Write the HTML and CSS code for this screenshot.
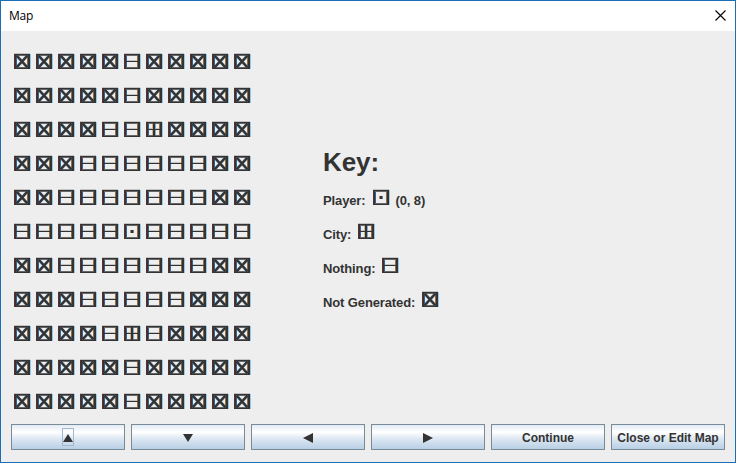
FILE: index.html
```
<!DOCTYPE html>
<html lang="en">
<head>
<meta charset="utf-8">
<title>Map</title>
<link rel="stylesheet" href="styles.css">
</head>
<body>
<svg class="sprites" width="0" height="0" shape-rendering="crispEdges">
  <symbol id="frame" viewBox="0 0 17 16">
    <path fill="#c4c4c4" d="M0 0h16v1H0z"/>
    <path fill="#5b2d2c" d="M0 1h1v15H0z"/>
    <path fill="#91c9ed" d="M16 1h1v15h-1z"/>
    <path fill="#333" d="M1 1h15v15H1zM2 2v13h12V2z" fill-rule="evenodd"/>
    <path fill="#2b6496" d="M2 2h1v13H2z"/>
    <path fill="#966a3a" d="M13 2h1v13h-1z"/>
    <path fill="#666" d="M2 2h12v1H2zM2 14h12v1H2z"/>
  </symbol>
  <symbol id="nothing" viewBox="0 0 17 16">
    <use href="#frame" width="17" height="16"/>
    <path fill="#c4c4c4" d="M3 7h10v1H3z"/><path fill="#333" d="M2 8h12v1H2z"/>
  </symbol>
  <symbol id="city" viewBox="0 0 17 16">
    <use href="#frame" width="17" height="16"/>
    <path fill="#c4c4c4" d="M3 7h10v1H3z"/>
    <path fill="#e4ad73" d="M6 3h1v11H6z"/><path fill="#70add8" d="M9 3h1v11H9z"/>
    <path fill="#333" d="M2 8h12v1H2zM7 2h2v13H7z"/>
  </symbol>
  <symbol id="player" viewBox="0 0 17 16">
    <use href="#frame" width="17" height="16"/>
    <path fill="#333" d="M7 7h2v3H7z"/>
    <path fill="#bf8249" d="M6 7h1v3H6z"/><path fill="#5f829c" d="M9 7h1v3H9z"/>
  </symbol>
  <symbol id="unknown" viewBox="0 0 17 16">
    <use href="#frame" width="17" height="16"/>
    <path fill="none" stroke="#2f6f9f" stroke-opacity=".45" stroke-width="3.2" shape-rendering="geometricPrecision" d="M2.5 2.5l11 12M13.5 2.5l-11 12"/>
    <path fill="none" stroke="#333" stroke-width="2.4" shape-rendering="geometricPrecision" d="M2.5 2.5l11 12M13.5 2.5l-11 12"/>
  </symbol>
</svg>
<div class="window">
  <header class="titlebar">
    <span>Map</span>
    <svg class="close" width="11" height="11" viewBox="0 0 11 11"><path d="M.5 .5l10 10M10.5 .5l-10 10"/></svg>
  </header>
  <main class="content">
    <div class="map" id="map"></div>
    <section class="key">
      <h1>Key:</h1>
      <p>Player: <svg class="tile"><use href="#player"/></svg> <span class="coords">(0, 8)</span></p>
      <p>City: <svg class="tile"><use href="#city"/></svg></p>
      <p>Nothing: <svg class="tile"><use href="#nothing"/></svg></p>
      <p>Not Generated: <svg class="tile"><use href="#unknown"/></svg></p>
    </section>
  </main>
  <footer class="buttons">
    <button aria-label="Up"><span class="focus"><svg width="10" height="8"><path d="M5 0l5 8H0z"/></svg></span></button>
    <button aria-label="Down"><svg width="10" height="8"><path d="M0 0h10L5 8z"/></svg></button>
    <button aria-label="Left"><svg width="10" height="10"><path d="M0 5l10-5v10z"/></svg></button>
    <button aria-label="Right"><svg width="10" height="10"><path d="M10 5L0 0v10z"/></svg></button>
    <button class="labeled">Continue</button>
    <button class="labeled">Close or Edit Map</button>
  </footer>
</div>
<script src="map.js"></script>
</body>
</html>
```
FILE: styles.css
```
* { box-sizing: border-box; }
body { margin: 0; font-family: "Liberation Sans", Arial, sans-serif; color: #333; }
.sprites { position: absolute; }
.window {
  width: 736px; height: 463px;
  display: flex; flex-direction: column;
  border: 1px solid #1a6eb5;
  background: #eee;
}
.titlebar {
  height: 30px; flex: none;
  display: flex; align-items: center; justify-content: space-between;
  padding: 0 9px 1px 8px;
  background: #fff; color: #000;
  font: 12px "Open Sans", "Noto Sans", sans-serif;
  letter-spacing: -0.2px;
}
.close { display: block; fill: none; stroke: #000; stroke-width: 1.1; }
.content { display: flex; height: 393px; flex: none; }
.map {
  display: grid;
  grid-template-columns: repeat(11, 22px);
  grid-auto-rows: 34px;
  width: 309px;
  padding: 22px 0 0 13px;
}
.tile { width: 17px; height: 16px; }
.map .tile { display: block; }
.key { padding: 114px 0 0 13px; }
.key h1 { margin: 0; height: 38px; font-size: 26px; line-height: 34px; letter-spacing: -0.1px; }
.key p {
  display: flex; align-items: center; gap: 7px;
  margin: 0; height: 34px;
  font-size: 13px; font-weight: bold; letter-spacing: -0.12px;
  white-space: nowrap;
}
.key .tile { flex: none; margin-bottom: 6px; }
.coords { margin-left: -1px; }
.buttons { display: grid; grid-template-columns: repeat(6, 114px); gap: 6px; padding: 0 10px; }
.buttons button {
  height: 26px; padding: 0;
  display: flex; align-items: center; justify-content: center;
  border: 1px solid #7a8a99; border-radius: 0;
  background: linear-gradient(#e2ebf4 0, #fff 30%, #dfe9f3 55%, #b8cfe5 100%);
  color: #333;
  font: bold 12px "Liberation Sans", Arial, sans-serif;
  white-space: nowrap;
}
.buttons .labeled { padding-top: 2px; }
.buttons svg { display: block; fill: #333; margin-top: 2px; }
.focus {
  width: 12px; height: 18px;
  display: flex; align-items: center; justify-content: center;
  border: 1px solid #a3b8cc;
}
```
FILE: map.js
```
const kinds = { x: "unknown", "-": "nothing", "+": "city", o: "player" };
const rows = [
  "xxxxx-xxxxx",
  "xxxxx-xxxxx",
  "xxxx--+xxxx",
  "xxx------xx",
  "xx-------xx",
  "-----o-----",
  "xx-------xx",
  "xxx-----xxx",
  "xxxx-+-xxxx",
  "xxxxx-xxxxx",
  "xxxxx-xxxxx"
];
document.getElementById("map").innerHTML = rows.join("").split("")
  .map(c => `<svg class="tile"><use href="#${kinds[c]}"/></svg>`).join("");
```
